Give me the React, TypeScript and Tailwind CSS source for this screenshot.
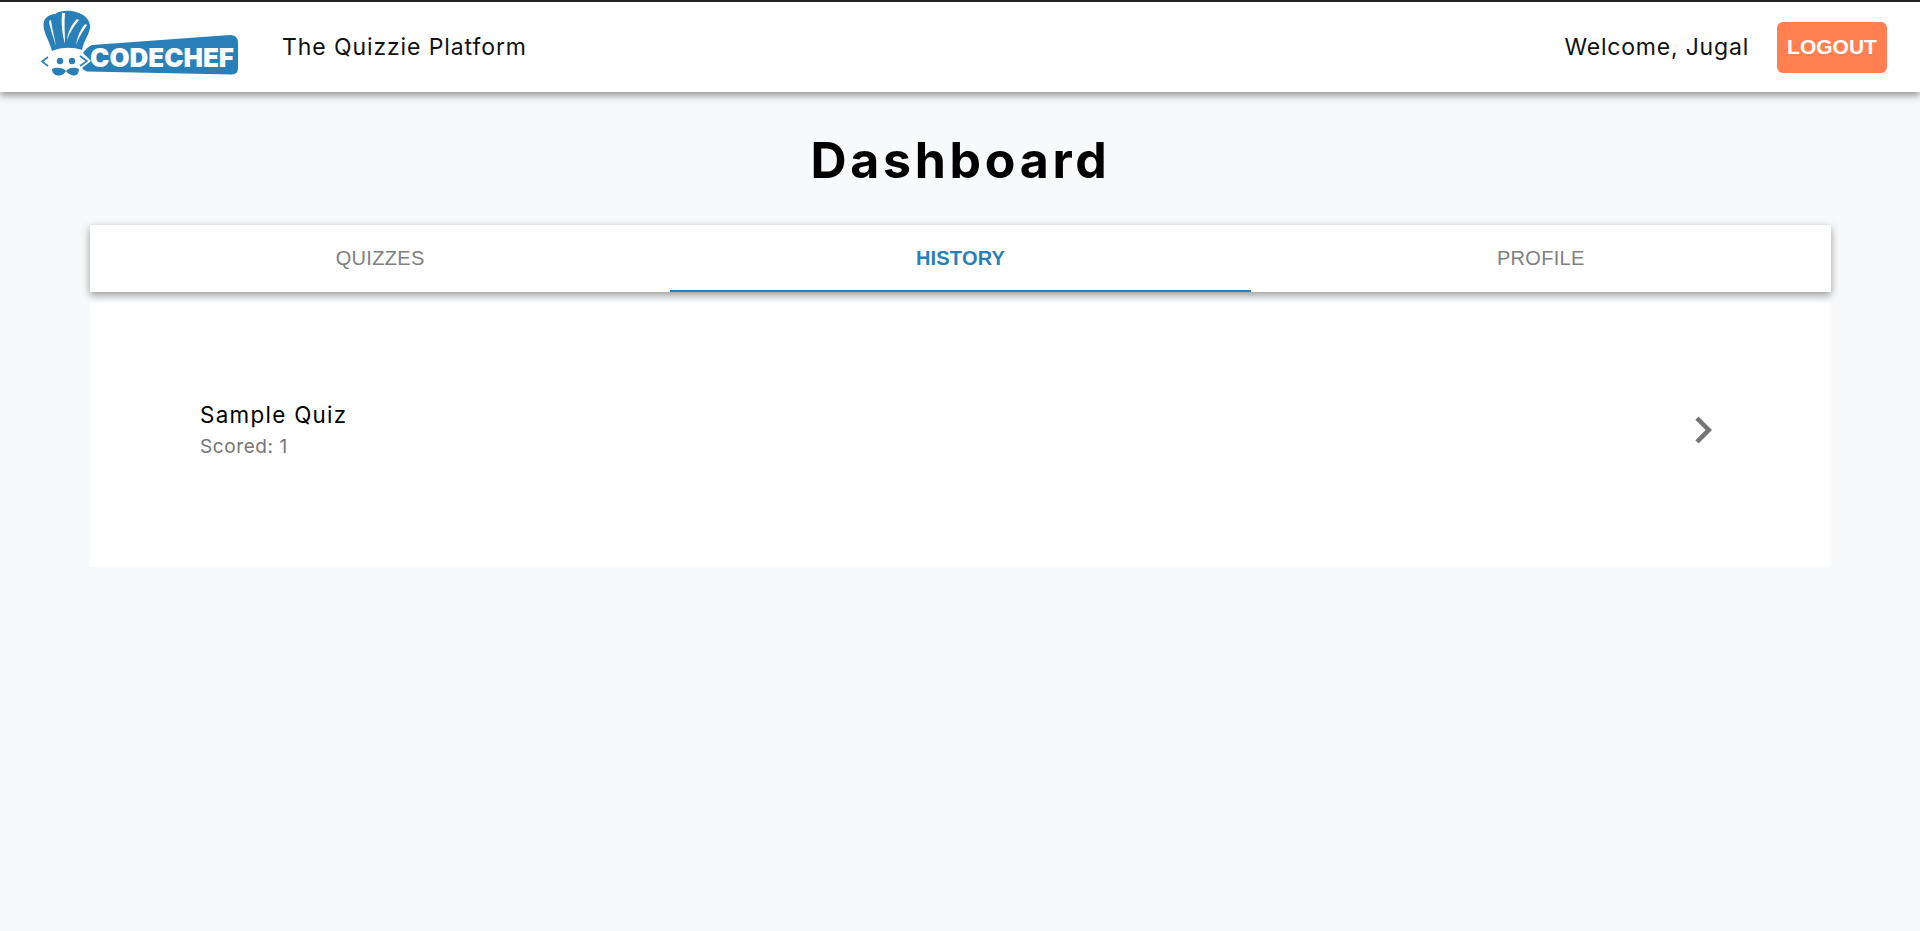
import { MdChevronRight } from "react-icons/md";

const tabs = ["QUIZZES", "HISTORY", "PROFILE"];

const Logo = () => (
  <svg width="200" height="74" viewBox="40 10 200 74" className="shrink-0">
    {/* hat */}
    <path
      d="M52 51 C49 40 43 32 43.5 24 C44 17 50 14.5 55 14 C60 10.5 70 10 76 12 C84 14 91 20 90 28 C89 35 84 40 82 50 C72 47 62 47 52 51 Z"
      fill="#2980b9"
    />
    <path d="M49 21 C50 29 53 36 56 46 C54 36 52 28 51 20 Z" fill="#fff" />
    <path d="M62 13 C61 24 62 34 65 44 C65 34 64 24 65 13 Z" fill="#fff" />
    <path d="M77 19 C71 25 68 32 67 40 C70 32 74 26 79 20 Z" fill="#fff" />
    <path d="M85 24 C80 30 77 37 76 45 C79 37 83 31 87 25 Z" fill="#fff" />
    {/* banner */}
    <path
      d="M92 45 L230 35 Q238 35 238 43 L238 68 Q238 75 231 74.5 L87 71.5 Q84 71 82 68 L91 61 L83 53 Q87 47 92 45 Z"
      fill="#2980b9"
    />
    <text
      x="90"
      y="67"
      fontFamily="'Inter', sans-serif"
      fontWeight="900"
      fontSize="26"
      fill="#fff"
      textLength="144"
      lengthAdjust="spacingAndGlyphs"
    >
      CODECHEF
    </text>
    {/* face */}
    <path d="M48 57 L42 61.5 L48 66" stroke="#2980b9" strokeWidth="1.6" fill="none" />
    <path d="M80 56 L87 61 L80 66" stroke="#2980b9" strokeWidth="1.6" fill="none" />
    <circle cx="60" cy="61" r="3.2" fill="#2980b9" />
    <circle cx="72" cy="61" r="3.2" fill="#2980b9" />
    <path
      d="M66 71 C63 67 55 67 52 69 C52 74 56 76 60 75.5 C63 75 65 73 66 71 C67 73 70 75 73 75.5 C77 76 79 73 79 69 C75 67 69 67 66 71 Z"
      fill="#2980b9"
    />
  </svg>
);

const App = () => {
  return (
    <div className="min-h-[931px] bg-[#f8f9fa] font-['Inter',sans-serif]">
      <header className="relative z-10 flex h-[92px] items-center justify-between border-t-2 border-[#222] bg-white pl-10 pr-[33px] shadow-[0_3px_8px_rgba(0,0,0,0.45)]">
        <div className="flex items-center gap-[42px]">
          <Logo />
          <span className="text-[23px] tracking-[0.9px] text-[#111]">The Quizzie Platform</span>
        </div>
        <div className="flex items-center gap-7">
          <span className="text-[23px] tracking-[0.8px] text-[#111]">Welcome, Jugal</span>
          <button className="h-[51px] w-[110px] rounded-md bg-[#ff7f50] font-['Liberation_Sans',sans-serif] text-[21px] font-bold text-white">
            LOGOUT
          </button>
        </div>
      </header>

      <main className="pl-[90px] pr-[89px]">
        <h1 className="pt-[39px] pb-[36px] text-center text-[50px] leading-[58px] font-bold tracking-[3.7px] text-black">
          Dashboard
        </h1>
        <nav className="relative z-[1] grid h-[67px] grid-cols-3 bg-white shadow-[0_3px_8px_rgba(0,0,0,0.4)]">
          {tabs.map((tab) => (
            <div
              key={tab}
              className={
                tab === "HISTORY"
                  ? "flex items-center justify-center border-b-2 border-[#2980b9] font-['Liberation_Sans',sans-serif] text-[20px] font-bold tracking-[0.2px] text-[#2980b9]"
                  : "flex items-center justify-center border-b-2 border-transparent font-['Liberation_Sans',sans-serif] text-[20px] tracking-[0.3px] text-[#808080]"
              }
            >
              {tab}
            </div>
          ))}
        </nav>
        <section className="mt-[10px] h-[265px] bg-white pt-[98px] pl-[110px] pr-[101px]">
          <div className="flex items-center justify-between">
            <div>
              <div className="text-[22.4px] leading-[30px] tracking-[1.3px] text-black">Sample Quiz</div>
              <div className="mt-1 text-[19px] leading-[26px] tracking-[0.6px] text-[#757575]">Scored: 1</div>
            </div>
            <MdChevronRight size={54} className="text-[#757575]" />
          </div>
        </section>
      </main>
    </div>
  );
};

export default App;
